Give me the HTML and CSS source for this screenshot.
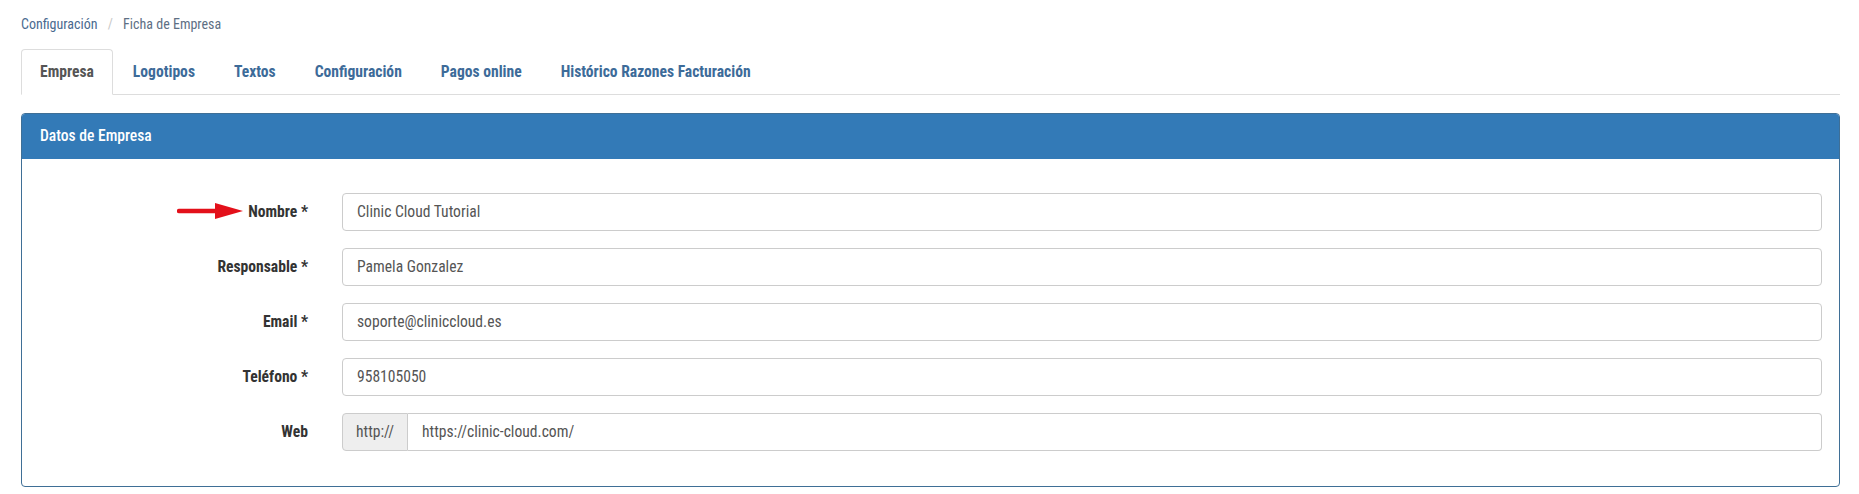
FILE: index.html
```html
<!DOCTYPE html>
<html lang="es">
<head>
  <meta charset="UTF-8" />
  <meta name="viewport" content="width=device-width, initial-scale=1.0"/>
  <title>Ficha de Empresa</title>
  <link rel="stylesheet" href="styles.css">
</head>
<body>
  <div class="page">
    <div class="breadcrumb">
      <a href="#">Configuración</a>
      <span class="sep">/</span>
      <span class="current">Ficha de Empresa</span>
    </div>

    <ul class="tabs">
      <li class="tab active"><a href="#">Empresa</a></li>
      <li class="tab"><a href="#">Logotipos</a></li>
      <li class="tab"><a href="#">Textos</a></li>
      <li class="tab"><a href="#">Configuración</a></li>
      <li class="tab"><a href="#">Pagos online</a></li>
      <li class="tab"><a href="#">Histórico Razones Facturación</a></li>
    </ul>

    <div class="panel">
      <div class="panel-heading">Datos de Empresa</div>
      <div class="panel-body">
        <div class="form-row">
          <label class="form-label">
            <svg class="arrow" width="68" height="18" viewBox="0 0 68 18">
              <path d="M2 9 L42 9" stroke="#e3101a" stroke-width="4.5" stroke-linecap="round"/>
              <path d="M38 1 L66 9 L38 17 Z" fill="#e3101a"/>
            </svg>
            Nombre *
          </label>
          <input class="form-input" type="text" value="Clinic Cloud Tutorial">
        </div>
        <div class="form-row">
          <label class="form-label">Responsable *</label>
          <input class="form-input" type="text" value="Pamela Gonzalez">
        </div>
        <div class="form-row">
          <label class="form-label">Email *</label>
          <input class="form-input" type="text" value="soporte@cliniccloud.es">
        </div>
        <div class="form-row">
          <label class="form-label">Teléfono *</label>
          <input class="form-input" type="text" value="958105050">
        </div>
        <div class="form-row">
          <label class="form-label">Web</label>
          <div class="input-group">
            <span class="addon">http://</span>
            <input class="form-input grouped" type="text" value="https://clinic-cloud.com/">
          </div>
        </div>
      </div>
    </div>
  </div>
</body>
</html>
```

FILE: styles.css
```css
* {
  box-sizing: border-box;
}

body {
  margin: 0;
  background: #ffffff;
  font-family: 'Roboto Condensed', 'DejaVu Sans Condensed', Roboto, sans-serif;
  font-stretch: condensed;
  font-size: 15.6px;
  color: #333;
}

.page {
  padding: 15px 19px 0 21px;
}

.breadcrumb {
  font-size: 14px;
  color: #5e6f84;
  height: 18px;
  line-height: 18px;
  margin-bottom: 16px;
}

.breadcrumb a {
  color: #4a6a8f;
  text-decoration: none;
}

.breadcrumb .sep {
  color: #c8c8c8;
  margin: 0 7px;
}

.tabs {
  list-style: none;
  margin: 0 0 18px 0;
  padding: 0;
  display: flex;
  border-bottom: 1px solid #dddddd;
}

.tab {
  margin-right: 1px;
  margin-bottom: -1px;
}

.tab a {
  display: block;
  height: 46px;
  line-height: 44px;
  padding: 0 18px;
  font-weight: 700;
  color: #3d6b99;
  text-decoration: none;
  border: 1px solid transparent;
  border-radius: 4px 4px 0 0;
}

.tab.active a {
  color: #555;
  background: #fff;
  border-color: #dddddd;
  border-bottom-color: #fff;
}

.panel {
  border: 1px solid #3f6f96;
  border-radius: 4px;
  background: #fff;
}

.panel-heading {
  background: #337ab7;
  color: #fff;
  height: 45px;
  line-height: 44px;
  padding: 0 18px;
  font-weight: 500;
  border-radius: 3px 3px 0 0;
}

.panel-body {
  padding: 34px 17px 35px 0;
  display: flex;
  flex-direction: column;
  gap: 17px;
}

.form-row {
  display: grid;
  grid-template-columns: 320px 1fr;
  align-items: center;
}

.form-label {
  position: relative;
  text-align: right;
  padding-right: 34px;
  font-weight: 700;
  color: #333;
}

.arrow {
  position: absolute;
  right: 97px;
  top: 50%;
  margin-top: -10px;
}

.form-input {
  height: 38px;
  width: 100%;
  border: 1px solid #cccccc;
  border-radius: 4px;
  padding: 0 14px;
  font-family: inherit;
  font-stretch: inherit;
  font-size: 15.6px;
  color: #555;
  background: #fff;
}

.input-group {
  display: flex;
}

.addon {
  width: 66px;
  height: 38px;
  line-height: 36px;
  text-align: center;
  background: #eeeeee;
  border: 1px solid #cccccc;
  border-radius: 4px 0 0 4px;
  color: #555;
}

.form-input.grouped {
  flex: 1;
  border-left: none;
  border-radius: 0 4px 4px 0;
}
```
